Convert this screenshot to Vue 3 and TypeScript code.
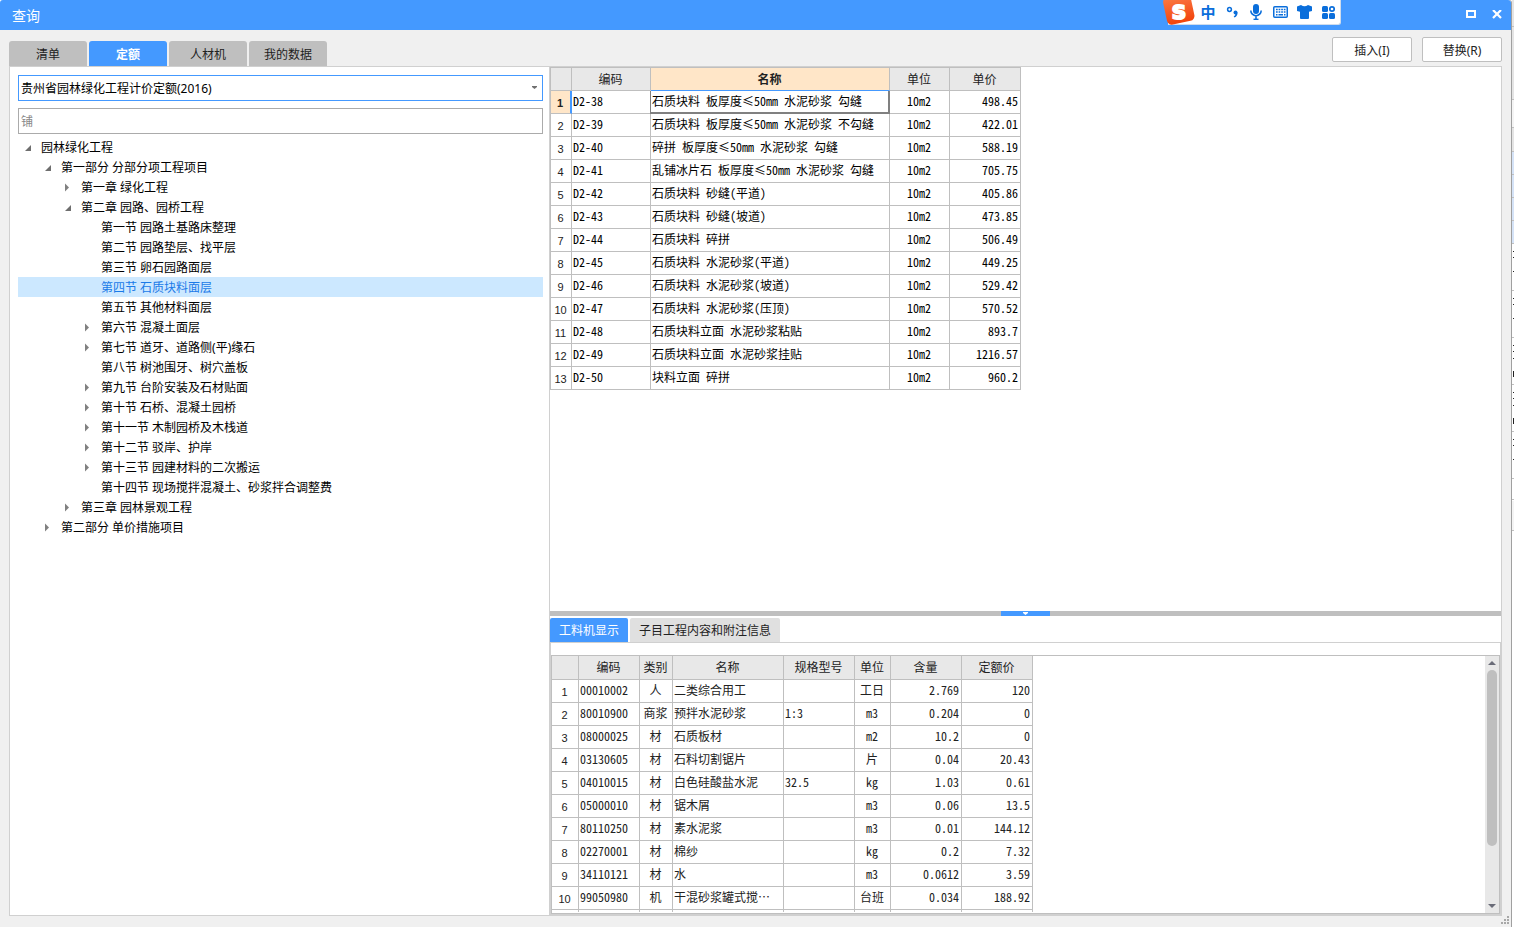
<script setup lang="ts">
import { ref } from 'vue'

interface TreeNode {
  level: number
  label: string
  state: 'open' | 'closed' | 'leaf'
}

const tabs: string[] = ['清单', '定额', '人材机', '我的数据']
const activeTab = ref('定额')
const library = ref('贵州省园林绿化工程计价定额(2016)')
const keyword = ref('铺')

const nodes: TreeNode[] = [
  { level: 0, label: '园林绿化工程', state: 'open' },
  { level: 1, label: '第一部分 分部分项工程项目', state: 'open' },
  { level: 2, label: '第一章 绿化工程', state: 'closed' },
  { level: 2, label: '第二章 园路、园桥工程', state: 'open' },
  { level: 3, label: '第一节 园路土基路床整理', state: 'leaf' },
  { level: 3, label: '第二节 园路垫层、找平层', state: 'leaf' },
  { level: 3, label: '第三节 卵石园路面层', state: 'leaf' },
  { level: 3, label: '第四节 石质块料面层', state: 'leaf' },
  { level: 3, label: '第五节 其他材料面层', state: 'leaf' },
  { level: 3, label: '第六节 混凝土面层', state: 'closed' },
  { level: 3, label: '第七节 道牙、道路侧(平)缘石', state: 'closed' },
  { level: 3, label: '第八节 树池围牙、树穴盖板', state: 'leaf' },
  { level: 3, label: '第九节 台阶安装及石材贴面', state: 'closed' },
  { level: 3, label: '第十节 石桥、混凝土园桥', state: 'closed' },
  { level: 3, label: '第十一节 木制园桥及木栈道', state: 'closed' },
  { level: 3, label: '第十二节 驳岸、护岸', state: 'closed' },
  { level: 3, label: '第十三节 园建材料的二次搬运', state: 'closed' },
  { level: 3, label: '第十四节 现场搅拌混凝土、砂浆拌合调整费', state: 'leaf' },
  { level: 2, label: '第三章 园林景观工程', state: 'closed' },
  { level: 1, label: '第二部分 单价措施项目', state: 'closed' },
]
const selectedNode = ref('第四节 石质块料面层')

const quotas: [string, string, string, string][] = [
  ['D2-38', '石质块料 板厚度≤50mm 水泥砂浆 勾缝', '10m2', '498.45'],
  ['D2-39', '石质块料 板厚度≤50mm 水泥砂浆 不勾缝', '10m2', '422.01'],
  ['D2-40', '碎拼 板厚度≤50mm 水泥砂浆 勾缝', '10m2', '588.19'],
  ['D2-41', '乱铺冰片石 板厚度≤50mm 水泥砂浆 勾缝', '10m2', '705.75'],
  ['D2-42', '石质块料 砂缝(平道)', '10m2', '405.86'],
  ['D2-43', '石质块料 砂缝(坡道)', '10m2', '473.85'],
  ['D2-44', '石质块料 碎拼', '10m2', '506.49'],
  ['D2-45', '石质块料 水泥砂浆(平道)', '10m2', '449.25'],
  ['D2-46', '石质块料 水泥砂浆(坡道)', '10m2', '529.42'],
  ['D2-47', '石质块料 水泥砂浆(压顶)', '10m2', '570.52'],
  ['D2-48', '石质块料立面 水泥砂浆粘贴', '10m2', '893.7'],
  ['D2-49', '石质块料立面 水泥砂浆挂贴', '10m2', '1216.57'],
  ['D2-50', '块料立面 碎拼', '10m2', '960.2'],
]
const currentRow = ref(0)

const resources: string[][] = [
  ['1', '00010002', '人', '二类综合用工', '', '工日', '2.769', '120'],
  ['2', '80010900', '商浆', '预拌水泥砂浆', '1:3', 'm3', '0.204', '0'],
  ['3', '08000025', '材', '石质板材', '', 'm2', '10.2', '0'],
  ['4', '03130605', '材', '石料切割锯片', '', '片', '0.04', '20.43'],
  ['5', '04010015', '材', '白色硅酸盐水泥', '32.5', 'kg', '1.03', '0.61'],
  ['6', '05000010', '材', '锯木屑', '', 'm3', '0.06', '13.5'],
  ['7', '80110250', '材', '素水泥浆', '', 'm3', '0.01', '144.12'],
  ['8', '02270001', '材', '棉纱', '', 'kg', '0.2', '7.32'],
  ['9', '34110121', '材', '水', '', 'm3', '0.0612', '3.59'],
  ['10', '99050980', '机', '干混砂浆罐式搅…', '', '台班', '0.034', '188.92'],
  ['', '', '', '', '', '', '', ''],
]
const resourceHeads = ['编码', '类别', '名称', '规格型号', '单位', '含量', '定额价']
const resourceAlign = ['num', 'left', 'mid', 'left', 'left', 'mid', 'right', 'right']

const lowerTabs = ['工料机显示', '子目工程内容和附注信息']
const activeLower = ref('工料机显示')
</script>

<template>
  <div class="screen">
    <main class="dialog">
      <header class="titlebar">
        <h1>查询</h1>
        <div class="winbtns">
          <button type="button" aria-label="最大化">
            <svg width="10" height="10" viewBox="0 0 10 10"><rect x="1" y="1" width="8" height="6" fill="none" stroke="#fff" stroke-width="2" /></svg>
          </button>
          <button type="button" aria-label="关闭">
            <svg width="10" height="10" viewBox="0 0 10 10"><path d="M1 0L9 8M9 0L1 8" stroke="#fff" stroke-width="2.200" /></svg>
          </button>
        </div>
      </header>

      <div class="ime">
        <svg class="ime-logo" width="34" height="28" viewBox="0 0 34 28" aria-hidden="true">
          <defs>
            <linearGradient id="flame" x1="0" y1="0" x2="0" y2="1">
              <stop offset="0" stop-color="#fb7a45" />
              <stop offset="1" stop-color="#f2440c" />
            </linearGradient>
          </defs>
          <rect x="3" y="-5" width="28" height="28" rx="5" fill="url(#flame)" transform="rotate(-12 17 10)" />
          <text x="17" y="19" text-anchor="middle" class="ime-s">S</text>
        </svg>
        <button type="button" class="zh">中</button>
        <button type="button" aria-label="标点">
          <svg width="24" height="24" viewBox="0 0 24 24"><circle cx="9.500" cy="9.500" r="1.900" fill="none" stroke="#0a6edb" stroke-width="1.500" /><circle cx="15.500" cy="12.500" r="2" fill="#0a6edb" /><path d="M17.500 12.500q.2 3.500-3 5l-.8-1q1.800-1.200 1.800-3z" fill="#0a6edb" /></svg>
        </button>
        <button type="button" aria-label="语音">
          <svg width="24" height="24" viewBox="0 0 24 24"><rect x="9" y="4" width="6" height="10" rx="3" fill="#0a6edb" /><path d="M6.800 10.500a5.200 5.200 0 0 0 10.400 0M12 16v3" fill="none" stroke="#0a6edb" stroke-width="1.600" /><path d="M9.500 19.300h5" stroke="#0a6edb" stroke-width="1.400" /></svg>
        </button>
        <button type="button" aria-label="键盘">
          <svg width="24" height="24" viewBox="0 0 24 24"><rect x="5.750" y="6.750" width="13.500" height="10.500" rx="1" fill="none" stroke="#0a6edb" stroke-width="1.500" /><path d="M8 9.500h10M8 12h10" stroke="#0a6edb" stroke-width="1.500" stroke-dasharray="1.700 .9" /><path d="M8 14.700h1.500M10.500 14.700h4.500M16 14.700h1.500" stroke="#0a6edb" stroke-width="1.500" /></svg>
        </button>
        <button type="button" aria-label="皮肤">
          <svg width="24" height="24" viewBox="0 0 24 24"><path d="M9 5q3.500 2.500 7 0l4 1.500v4.500l-3 .8v6.200q0 1-1 1h-7q-1 0-1-1v-6.200l-3-.8v-4.500z" fill="#0a6edb" /></svg>
        </button>
        <button type="button" aria-label="工具箱">
          <svg width="24" height="24" viewBox="0 0 24 24"><g fill="#0a6edb"><rect x="6" y="6" width="6" height="6" rx="1.500" /><rect x="6" y="13" width="6" height="6" rx="1.500" /><rect x="13" y="13" width="6" height="6" rx="1.500" /></g><circle cx="16" cy="9" r="2.200" fill="none" stroke="#0a6edb" stroke-width="1.700" /></svg>
        </button>
      </div>

      <div class="toolbar">
        <nav class="tabs">
          <button v-for="t in tabs" :key="t" type="button" :class="{ active: t === activeTab }" @click="activeTab = t">{{ t }}</button>
        </nav>
        <div class="actions">
          <button type="button">插入(I)</button>
          <button type="button">替换(R)</button>
        </div>
      </div>

      <div class="panel">
        <section class="side">
          <div class="combo">
            <select v-model="library" aria-label="定额库">
              <option>贵州省园林绿化工程计价定额(2016)</option>
            </select>
            <svg width="5" height="3" viewBox="0 0 5 3" aria-hidden="true"><path d="M0 0h5v1L2.500 3L0 1z" fill="#707070" /></svg>
          </div>
          <input v-model="keyword" class="search" type="text" aria-label="搜索">
          <ul class="tree" role="tree">
            <li
              v-for="n in nodes"
              :key="n.label"
              role="treeitem"
              :class="{ selected: n.label === selectedNode }"
              :style="{ paddingLeft: n.level * 20 + 'px' }"
              @click="selectedNode = n.label"
            >
              <svg width="23" height="20" viewBox="0 0 23 20" aria-hidden="true">
                <path v-if="n.state === 'open'" d="M13 8v6H7z" fill="#6e6e6e" />
                <path v-else-if="n.state === 'closed'" d="M7 6.500l4 4-4 4z" fill="#808080" />
              </svg>
              <span>{{ n.label }}</span>
            </li>
          </ul>
        </section>

        <section class="content">
          <div class="upper">
            <table class="grid quota">
              <colgroup>
                <col class="w21"><col class="w79"><col class="w239"><col class="w60"><col class="w71">
              </colgroup>
              <thead>
                <tr><th /><th>编码</th><th class="current">名称</th><th>单位</th><th>单价</th></tr>
              </thead>
              <tbody>
                <tr v-for="(q, i) in quotas" :key="q[0]" :class="{ picked: i === currentRow }" @click="currentRow = i">
                  <td class="num">{{ i + 1 }}</td>
                  <td class="left">{{ q[0] }}</td>
                  <td class="left name">{{ q[1] }}</td>
                  <td class="mid">{{ q[2] }}</td>
                  <td class="right">{{ q[3] }}</td>
                </tr>
              </tbody>
            </table>
          </div>

          <div class="splitter">
            <button type="button" aria-label="折叠">
              <svg width="5" height="3" viewBox="0 0 5 3"><path d="M0 0h5v1L2.500 3L0 1z" fill="#fff" /></svg>
            </button>
          </div>

          <div class="lower">
            <nav class="subtabs">
              <button v-for="t in lowerTabs" :key="t" type="button" :class="{ active: t === activeLower }" @click="activeLower = t">{{ t }}</button>
            </nav>
            <div class="page">
              <div class="box">
                <div class="view">
                  <table class="grid resource">
                    <colgroup>
                      <col class="w27"><col class="w61"><col class="w33"><col class="w111"><col class="w71"><col class="w36"><col class="w71"><col class="w71">
                    </colgroup>
                    <thead>
                      <tr><th /><th v-for="h in resourceHeads" :key="h">{{ h }}</th></tr>
                    </thead>
                    <tbody>
                      <tr v-for="(r, i) in resources" :key="i">
                        <td v-for="(c, j) in r" :key="j" :class="resourceAlign[j]">{{ c }}</td>
                      </tr>
                    </tbody>
                  </table>
                </div>
                <div class="scroll">
                  <button type="button" aria-label="向上滚动"><svg width="8" height="4" viewBox="0 0 8 4"><path d="M0 4h8L4 0z" fill="#6a6c78" /></svg></button>
                  <div class="track"><div class="thumb" /></div>
                  <button type="button" aria-label="向下滚动"><svg width="8" height="4" viewBox="0 0 8 4"><path d="M0 0h8L4 4z" fill="#6a6c78" /></svg></button>
                </div>
              </div>
            </div>
          </div>
        </section>
      </div>

      <svg class="grip" width="8" height="8" viewBox="0 0 8 8" aria-hidden="true">
        <path d="M6 0h2v2H6zM3 3h2v2H3zM6 3h2v2H6zM0 6h2v2H0zM3 6h2v2H3zM6 6h2v2H6z" fill="#a8a8a8" />
      </svg>
    </main>

    <!-- Sliver of the main window showing behind the dialog -->
    <div class="behind" aria-hidden="true">
      <svg width="2" height="540" viewBox="0 0 2 540">
        <rect width="2" height="99" fill="#e4e4e4" />
        <rect y="100" width="2" height="27" fill="#f4f4f4" />
        <rect y="127" width="2" height="24" fill="#e4e4e4" />
        <rect y="151" width="2" height="92" fill="#d5e3f7" />
        <rect y="501" width="2" height="29" fill="#f4f4f4" />
        <path d="M0 26.500h2M0 99.500h2M0 127.500h2M0 151.500h2M0 174.500h2M0 197.500h2M0 220.500h2M0 243.500h2M0 290.500h2M0 337.500h2M0 384.500h2M0 431.500h2M0 478.500h2M0 499.500h2M0 530.500h2" stroke="#c0c0c0" />
        <path d="M1 251h1v1H1zM1 257h1v1H1zM1 271h1v1H1zM1 298h1v1H1zM1 304h1v1H1zM1 318h1v1H1zM1 345h1v1H1zM1 351h1v1H1zM1 358h1v1H1zM1 371h1v6H1zM1 392h1v1H1zM1 398h1v1H1zM1 405h1v1H1zM1 418h1v6H1zM1 439h1v1H1zM1 445h1v1H1zM1 459h1v1H1z" fill="#222" />
      </svg>
    </div>
  </div>
</template>

<style>
body {
  margin: 0;
}
</style>

<style scoped>
* {
  box-sizing: border-box;
}
.screen {
  display: flex;
  height: 100vh;
  background: #fff;
  font-family: "Noto Sans", "Noto Sans CJK SC", sans-serif;
  font-size: 12px;
  color: #000;
}
button,
input,
select {
  font: inherit;
  color: inherit;
  margin: 0;
  padding: 0;
  border: 0;
  outline: none;
  background: none;
  border-radius: 0;
}
svg {
  display: block;
}
.behind {
  flex: 0 0 2px;
  overflow: hidden;
}
.dialog {
  position: relative;
  flex: 1;
  min-width: 0;
  display: flex;
  flex-direction: column;
  padding-bottom: 11px;
  background: #f0f0f0;
  border-right: 1px solid #a0a0a0;
  border-radius: 3px 3px 0 0;
}
.titlebar {
  flex: 0 0 30px;
  display: flex;
  align-items: center;
  justify-content: space-between;
  padding: 0 9px 0 12px;
  background: #4499ff;
  border-radius: 3px 3px 0 0;
  color: #fff;
}
.titlebar h1 {
  margin: 0;
  padding-top: 2px;
  font-size: 14px;
  line-height: 28px;
  font-weight: 400;
}
.winbtns {
  display: flex;
  gap: 16px;
}
.ime {
  position: absolute;
  top: 0;
  right: 170px;
  display: flex;
  height: 25px;
  background: #fff;
  border: solid #cfdcec;
  border-width: 0 1px 1px 0;
  border-radius: 0 0 3px 0;
}
.ime-logo {
  margin-left: -6px;
  overflow: hidden;
}
.ime-s {
  font: bold 20px "DejaVu Sans", sans-serif;
  fill: #fff;
  stroke: #fff;
  stroke-width: 2;
}
.ime button {
  width: 24px;
  height: 24px;
}
.ime .zh {
  color: #0a6edb;
  font-size: 15px;
  font-weight: 700;
  line-height: 22px;
}
.toolbar {
  flex: 0 0 36px;
  display: flex;
  justify-content: space-between;
  align-items: flex-end;
  padding: 0 9px;
}
.tabs,
.subtabs {
  display: flex;
  gap: 2px;
}
.tabs button {
  width: 78px;
  height: 25px;
  background: #bfbfbf;
  border-radius: 3px 3px 0 0;
  color: #222;
}
.tabs .active {
  background: #4499ff;
  color: #fff;
  font-weight: 700;
}
.actions {
  display: flex;
  gap: 10px;
  margin-bottom: 4px;
}
.actions button {
  width: 80px;
  height: 25px;
  border: 1px solid #bfbfbf;
  border-radius: 2px;
  background: #fff;
  color: #222;
}
.panel {
  flex: 1;
  min-height: 0;
  display: grid;
  grid-template-columns: 540px minmax(0, 1fr);
  grid-template-rows: minmax(0, 1fr);
  margin: 0 9px;
  border: 1px solid #d0d0d0;
  background: #fff;
}
.side {
  padding: 8px 6px 0 8px;
  border-right: 1px solid #d0d0d0;
  overflow: hidden;
}
.combo {
  position: relative;
  height: 26px;
  margin-bottom: 7px;
}
.combo select {
  width: 100%;
  height: 26px;
  padding: 0 2px;
  border: 1px solid #4499ff;
  appearance: none;
  background: #fff;
}
.combo svg {
  position: absolute;
  right: 6px;
  top: 11px;
}
.search {
  width: 100%;
  height: 26px;
  padding: 0 2px;
  border: 1px solid #ababab;
  color: #888;
  display: block;
}
.tree {
  margin: 3px 0 0;
  padding: 0;
  list-style: none;
}
.tree li {
  display: flex;
  height: 20px;
  line-height: 22px;
  white-space: nowrap;
}
.tree .selected {
  background: #cce8ff;
  color: #1a7ae8;
}
.content {
  display: flex;
  flex-direction: column;
  min-height: 0;
}
.upper {
  flex: 1;
  min-height: 0;
  overflow: hidden;
}
.grid {
  table-layout: fixed;
  border-collapse: separate;
  border-spacing: 0;
  font-family: "Noto Sans Mono CJK SC", "Noto Sans CJK SC", monospace;
  font-size: 12px;
  line-height: 16px;
}
.quota {
  width: 471px;
  border: solid #bfbfbf;
  border-width: 1px 0 0 1px;
}
.resource {
  width: 481px;
}
.w21 { width: 21px; }
.w27 { width: 27px; }
.w33 { width: 33px; }
.w36 { width: 36px; }
.w60 { width: 60px; }
.w61 { width: 61px; }
.w71 { width: 71px; }
.w79 { width: 79px; }
.w111 { width: 111px; }
.w239 { width: 239px; }
.grid th,
.grid td {
  height: 23px;
  padding: 0 2px 2px 1px;
  border: solid #bfbfbf;
  border-width: 0 1px 1px 0;
  overflow: hidden;
  white-space: nowrap;
  vertical-align: middle;
}
.grid th {
  padding: 0 1px 0 0;
  background: #e8e8e8;
  font-weight: 400;
  color: #222;
}
.grid.resource th {
  height: 24px;
  padding-bottom: 2px;
}
.grid .left {
  text-align: left;
}
.grid .mid {
  text-align: center;
}
.grid .right {
  text-align: right;
}
.grid .num {
  padding: 1px 1px 0 0;
  text-align: center;
  font-family: "Liberation Sans", sans-serif;
  font-size: 11px;
  color: #222;
}
.resource td {
  color: #222;
}
.grid .current {
  background: #ffe6c8;
  font-weight: 700;
  border-bottom-color: #4499ff;
}
.picked .num {
  background: #ffe6c8;
  font-weight: 700;
  border-right: 2px solid #4499ff;
}
.picked .name {
  border-right: 2px solid #808080;
  border-bottom: 2px solid #808080;
  padding-bottom: 1px;
  box-shadow: -1px 0 0 #808080;
}
.splitter {
  flex: 0 0 5px;
  display: flex;
  justify-content: center;
  background: #bfbfbf;
}
.splitter button {
  display: flex;
  justify-content: center;
  width: 49px;
  height: 5px;
  padding-top: 1px;
  background: #4499ff;
}
.lower {
  flex: 0 0 299px;
  min-height: 0;
  display: flex;
  flex-direction: column;
}
.subtabs {
  padding-top: 2px;
}
.subtabs button {
  height: 24px;
  padding: 0 9px;
  background: #e0e0e0;
  border-radius: 2px 2px 0 0;
  color: #222;
}
.subtabs .active {
  background: #4499ff;
  color: #fff;
}
.page {
  flex: 1;
  min-height: 0;
  display: flex;
  padding-top: 12px;
  border: 1px solid #d0d0d0;
}
.box {
  flex: 1;
  min-width: 0;
  min-height: 0;
  display: flex;
  border: 1px solid #bfbfbf;
}
.view {
  flex: 1;
  min-width: 0;
  margin-bottom: 1px;
  overflow: hidden;
}
.scroll {
  flex: 0 0 14px;
  display: flex;
  flex-direction: column;
  background: #e8e8e8;
}
.scroll button {
  flex: 0 0 14px;
  display: flex;
  align-items: center;
  justify-content: center;
}
.track {
  flex: 1;
  padding: 0 2px;
}
.thumb {
  height: 77%;
  border-radius: 5px;
  background: #bfbfbf;
}
.grip {
  position: absolute;
  right: 2px;
  bottom: 3px;
}
</style>
